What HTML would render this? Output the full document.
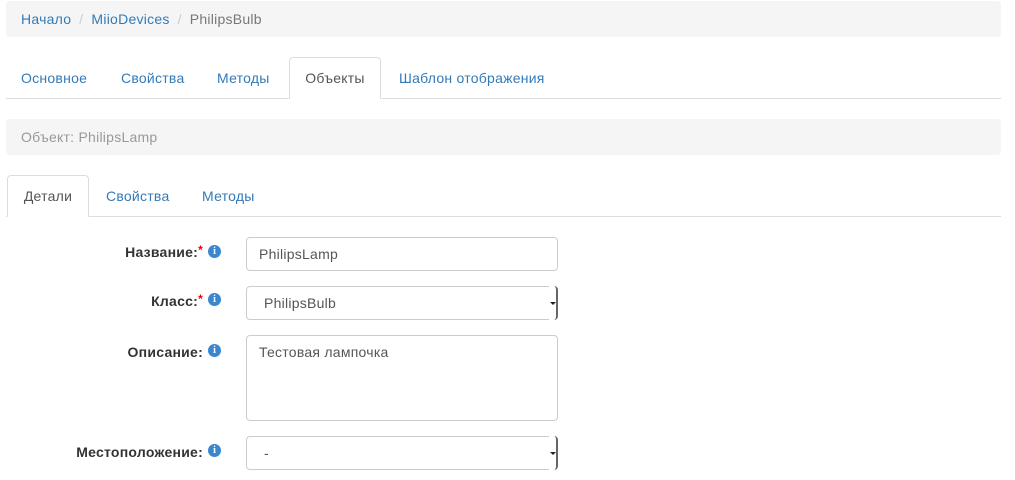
<!DOCTYPE html>
<html><head><meta charset="utf-8"><style>
*{box-sizing:border-box;margin:0;padding:0}
body{width:1015px;height:480px;background:#fff;font-family:"Liberation Sans",Arial,sans-serif;font-size:14px;color:#333;position:relative;overflow:hidden;letter-spacing:0.25px}
a{color:#337ab7;text-decoration:none}
.abs{position:absolute}
.bc{left:6px;top:1px;width:995px;height:36px;background:#f5f5f5;border-radius:4px;padding:9px 15px;line-height:18px}
.bc .s{color:#ccc;padding:0 8px}
.bc .c{color:#777}
.line{height:1px;background:#ddd}
.tab{line-height:20px}
.act{border:1px solid #ddd;border-bottom-color:#fff;border-radius:4px 4px 0 0;background:#fff;color:#555;text-align:center}
.panel{left:6px;top:119px;width:995px;height:36px;background:#f5f5f5;border-radius:4px;padding:9px 15px;color:#999;line-height:18px}
.lbl{font-weight:bold;text-align:right;left:0}
.lbl .st{color:#e00;font-size:12px;vertical-align:top;position:relative;top:-1px}
.ic{width:13px;height:13px;border-radius:50%;background:#3a87d0;color:#fff;font-size:10px;font-weight:bold;text-align:center;line-height:13px;font-family:"Liberation Serif",serif;letter-spacing:0}
.in{left:246px;width:312px;border:1px solid #ccc;border-radius:4px;padding:6px 12px;line-height:20px;color:#555;background:#fff}
.arr{right:-1px;top:-1px;bottom:-1px;width:9px;background:#fff;border-right:2px solid #666;border-radius:0 4px 4px 0}
.arr:after{content:"";position:absolute;left:1px;top:50%;margin-top:-1px;border-left:3px solid transparent;border-right:3px solid transparent;border-top:3px solid #222}
</style></head><body>
<div class="abs bc"><a href="#">Начало</a><span class="s">/</span><a href="#">MiioDevices</a><span class="s">/</span><span class="c">PhilipsBulb</span></div>

<div class="abs line" style="left:6px;top:98px;width:995px"></div>
<a class="abs tab" style="left:21px;top:68px">Основное</a>
<a class="abs tab" style="left:121px;top:68px">Свойства</a>
<a class="abs tab" style="left:217px;top:68px">Методы</a>
<div class="abs tab act" style="left:289px;top:57px;width:92px;height:42px;padding-top:10px">Объекты</div>
<a class="abs tab" style="left:399px;top:68px">Шаблон отображения</a>

<div class="abs panel">Объект: PhilipsLamp</div>

<div class="abs line" style="left:6px;top:216px;width:995px"></div>
<div class="abs tab act" style="left:7px;top:175px;width:82px;height:42px;padding-top:10px">Детали</div>
<a class="abs tab" style="left:106px;top:186px">Свойства</a>
<a class="abs tab" style="left:202px;top:186px">Методы</a>

<div class="abs lbl" style="top:244px;width:203px">Название:<span class="st">*</span></div>
<div class="abs ic" style="left:208px;top:245px">i</div>
<div class="abs in" style="top:237px;height:34px">PhilipsLamp</div>

<div class="abs lbl" style="top:293px;width:203px">Класс:<span class="st">*</span></div>
<div class="abs ic" style="left:208px;top:293px">i</div>
<div class="abs in" style="top:286px;height:34px;padding-left:17px">PhilipsBulb<div class="abs arr"></div></div>

<div class="abs lbl" style="top:344px;width:203px">Описание:</div>
<div class="abs ic" style="left:208px;top:344px">i</div>
<div class="abs in" style="top:335px;height:86px">Тестовая лампочка</div>

<div class="abs lbl" style="top:444px;width:203px">Местоположение:</div>
<div class="abs ic" style="left:208px;top:444px">i</div>
<div class="abs in" style="top:436px;height:34px;padding-left:17px">-<div class="abs arr"></div></div>
</body></html>
